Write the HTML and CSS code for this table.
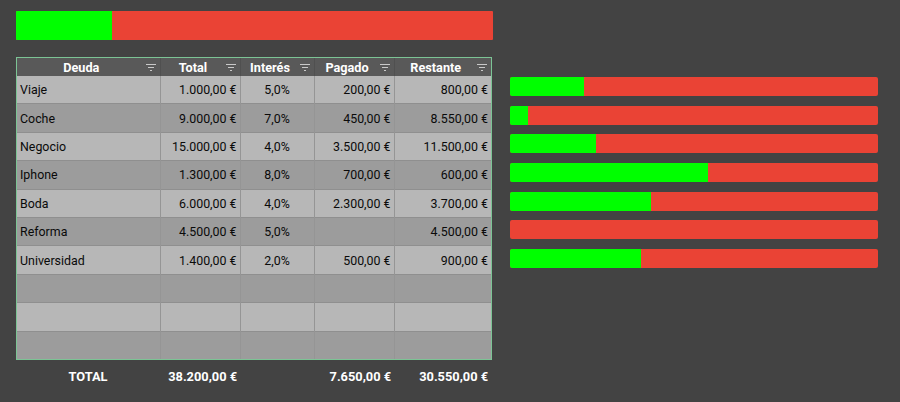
FILE: index.html
```html
<!DOCTYPE html>
<html lang="es">
<head>
    <meta charset="UTF-8">
    <title>Deudas</title>
    <link rel="stylesheet" href="styles.css">
</head>
<body>
    <div class="bar top-bar">
        <div class="bar-paid" style="width: 20.03%"></div>
    </div>

    <div class="main">
        <div class="sheet">
            <div class="table-frame">
                <table class="debts">
                    <colgroup>
                        <col style="width: 143px">
                        <col style="width: 80px">
                        <col style="width: 74px">
                        <col style="width: 80px">
                        <col style="width: 97px">
                    </colgroup>
                    <thead>
                        <tr>
                            <th><div class="th-inner"><span>Deuda</span><svg class="filter" width="10" height="7" viewBox="0 0 10 7"><path d="M0 0.5h10M2 3.5h6M4 6.5h2" stroke="#c9c9c9" stroke-width="1.2"/></svg></div></th>
                            <th><div class="th-inner"><span>Total</span><svg class="filter" width="10" height="7" viewBox="0 0 10 7"><path d="M0 0.5h10M2 3.5h6M4 6.5h2" stroke="#c9c9c9" stroke-width="1.2"/></svg></div></th>
                            <th><div class="th-inner"><span>Interés</span><svg class="filter" width="10" height="7" viewBox="0 0 10 7"><path d="M0 0.5h10M2 3.5h6M4 6.5h2" stroke="#c9c9c9" stroke-width="1.2"/></svg></div></th>
                            <th><div class="th-inner"><span>Pagado</span><svg class="filter" width="10" height="7" viewBox="0 0 10 7"><path d="M0 0.5h10M2 3.5h6M4 6.5h2" stroke="#c9c9c9" stroke-width="1.2"/></svg></div></th>
                            <th><div class="th-inner"><span>Restante</span><svg class="filter" width="10" height="7" viewBox="0 0 10 7"><path d="M0 0.5h10M2 3.5h6M4 6.5h2" stroke="#c9c9c9" stroke-width="1.2"/></svg></div></th>
                        </tr>
                    </thead>
                    <tbody>
                        <tr><td>Viaje</td><td class="num">1.000,00 €</td><td class="pct">5,0%</td><td class="num">200,00 €</td><td class="num">800,00 €</td></tr>
                        <tr><td>Coche</td><td class="num">9.000,00 €</td><td class="pct">7,0%</td><td class="num">450,00 €</td><td class="num">8.550,00 €</td></tr>
                        <tr><td>Negocio</td><td class="num">15.000,00 €</td><td class="pct">4,0%</td><td class="num">3.500,00 €</td><td class="num">11.500,00 €</td></tr>
                        <tr><td>Iphone</td><td class="num">1.300,00 €</td><td class="pct">8,0%</td><td class="num">700,00 €</td><td class="num">600,00 €</td></tr>
                        <tr><td>Boda</td><td class="num">6.000,00 €</td><td class="pct">4,0%</td><td class="num">2.300,00 €</td><td class="num">3.700,00 €</td></tr>
                        <tr><td>Reforma</td><td class="num">4.500,00 €</td><td class="pct">5,0%</td><td class="num"></td><td class="num">4.500,00 €</td></tr>
                        <tr><td>Universidad</td><td class="num">1.400,00 €</td><td class="pct">2,0%</td><td class="num">500,00 €</td><td class="num">900,00 €</td></tr>
                        <tr><td></td><td></td><td></td><td></td><td></td></tr>
                        <tr><td></td><td></td><td></td><td></td><td></td></tr>
                        <tr><td></td><td></td><td></td><td></td><td></td></tr>
                    </tbody>
                </table>
            </div>
            <div class="totals">
                <div class="total-label">TOTAL</div>
                <div class="total-num">38.200,00 €</div>
                <div></div>
                <div class="total-num">7.650,00 €</div>
                <div class="total-num">30.550,00 €</div>
            </div>
        </div>

        <div class="bars">
            <div class="bar"><div class="bar-paid" style="width: 20%"></div></div>
            <div class="bar"><div class="bar-paid" style="width: 5%"></div></div>
            <div class="bar"><div class="bar-paid" style="width: 23.33%"></div></div>
            <div class="bar"><div class="bar-paid" style="width: 53.85%"></div></div>
            <div class="bar"><div class="bar-paid" style="width: 38.33%"></div></div>
            <div class="bar"><div class="bar-paid" style="width: 0%"></div></div>
            <div class="bar"><div class="bar-paid" style="width: 35.71%"></div></div>
        </div>
    </div>
</body>
</html>
```

FILE: styles.css
```css
body {
    margin: 0;
    padding: 11px 0 0 16px;
    background: #434343;
    font-family: Roboto, 'Liberation Sans', sans-serif;
    font-size: 12.4px;
    color: #0a0a0a;
    height: 402px;
    box-sizing: border-box;
    overflow: hidden;
}
.bar {
    display: flex;
    background: #ea4335;
    border-radius: 2px;
    overflow: hidden;
}
.bar-paid {
    background: #00ff00;
}
.top-bar {
    width: 477px;
    height: 29px;
    border-radius: 1px;
}
.main {
    display: flex;
    gap: 18px;
    margin-top: 17px;
}
.sheet {
    width: 476px;
}
.table-frame {
    border: 1px solid #7cc495;
}
.debts {
    width: 474px;
    border-collapse: collapse;
    table-layout: fixed;
}
.debts th {
    background: #595959;
    color: #fff;
    font-size: 12.7px;
    font-weight: bold;
    height: 18px;
    padding: 0;
    border-left: 1px solid #505050;
}
.debts th:first-child,
.debts td:first-child {
    border-left: none;
}
.th-inner {
    display: flex;
    align-items: center;
    padding: 0 4px 0 0;
}
.th-inner span {
    flex: 1;
    text-align: center;
    padding-left: 2px;
}
.filter {
    margin-left: 2px;
}
.debts td {
    height: 27.4px;
    padding: 0 3px;
    border-left: 1px solid #959595;
    border-top: 1px solid #8f8f8f;
    white-space: nowrap;
}
.debts tbody tr:nth-child(odd) td {
    background: #b7b7b7;
}
.debts tbody tr:nth-child(even) td {
    background: #9c9c9c;
}
.debts tbody tr:first-child td {
    border-top: none;
}
.debts .num {
    text-align: right;
}
.debts .pct {
    text-align: center;
}
.totals {
    display: grid;
    grid-template-columns: 144px 80px 74px 80px 97px;
    height: 34px;
    align-items: center;
    color: #fff;
    font-size: 12.8px;
    font-weight: bold;
}
.total-label {
    text-align: center;
}
.total-num {
    text-align: right;
    padding-right: 3px;
}
.bars {
    width: 368px;
    padding-top: 20px;
    display: flex;
    flex-direction: column;
    gap: 9.7px;
}
.bars .bar {
    height: 19px;
}
```
